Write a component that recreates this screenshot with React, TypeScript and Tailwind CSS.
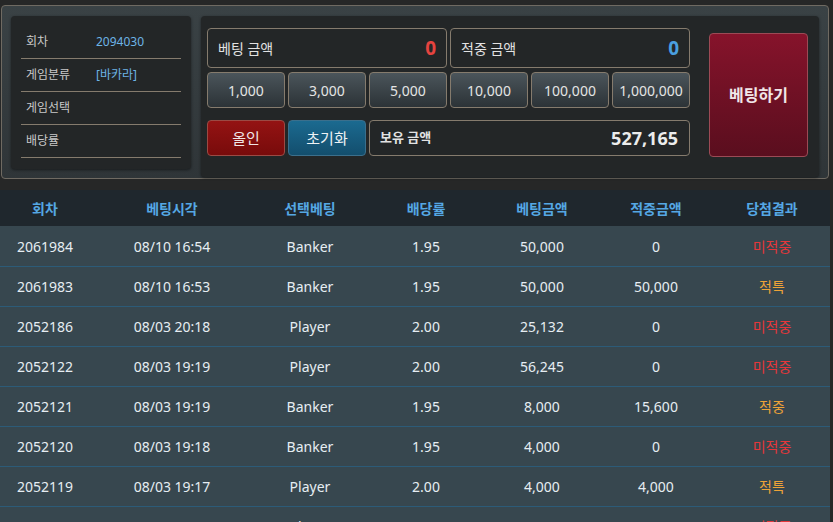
import React from "react";

const font = { fontFamily: '"Noto Sans", "Noto Sans CJK KR", sans-serif' };

type Row = {
  no: string;
  time: string;
  pick: string;
  odds: string;
  bet: string;
  win: string;
  result: string;
};

const rows: Row[] = [
  { no: "2061984", time: "08/10 16:54", pick: "Banker", odds: "1.95", bet: "50,000", win: "0", result: "미적중" },
  { no: "2061983", time: "08/10 16:53", pick: "Banker", odds: "1.95", bet: "50,000", win: "50,000", result: "적특" },
  { no: "2052186", time: "08/03 20:18", pick: "Player", odds: "2.00", bet: "25,132", win: "0", result: "미적중" },
  { no: "2052122", time: "08/03 19:19", pick: "Player", odds: "2.00", bet: "56,245", win: "0", result: "미적중" },
  { no: "2052121", time: "08/03 19:19", pick: "Banker", odds: "1.95", bet: "8,000", win: "15,600", result: "적중" },
  { no: "2052120", time: "08/03 19:18", pick: "Banker", odds: "1.95", bet: "4,000", win: "0", result: "미적중" },
  { no: "2052119", time: "08/03 19:17", pick: "Player", odds: "2.00", bet: "4,000", win: "4,000", result: "적특" },
  { no: "2052118", time: "08/03 19:16", pick: "Player", odds: "2.00", bet: "3,000", win: "0", result: "미적중" },
];

const cols = "grid grid-cols-[90px_164px_112px_120px_112px_116px_116px]";

function InfoRow({ label, value }: { label: string; value?: string }) {
  return (
    <div className="flex h-[33px] items-center border-b border-[#857b6d] px-[5px] text-[12px]">
      <span className="w-[70px] text-[#c9c9c9]">{label}</span>
      {value && <span className="text-[#6db4e6]">{value}</span>}
    </div>
  );
}

function Chip({ label }: { label: string }) {
  return (
    <button className="flex h-[36px] items-center justify-center rounded-[4px] border border-[#857b6d] bg-gradient-to-b from-[#4b555b] to-[#2c3337] text-[14px] text-[#e4e4e4]">
      {label}
    </button>
  );
}

export default function App() {
  return (
    <div className="min-h-[522px] w-[833px] overflow-hidden bg-[#262727]" style={font}>
      <div className="pt-[5px] pl-[1px]">
        <div className="flex h-[174px] w-[828px] rounded-[4px] border border-[#6f6a62] bg-gradient-to-b from-[#3a4245] to-[#2f3538] pl-[9px] pr-[9px] pt-[10px]">
          {/* left info panel */}
          <div className="h-[153px] w-[180px] rounded-[4px] bg-[#232627] px-[10px] pt-[10px] shadow-[0_1px_3px_rgba(0,0,0,0.5)]">
            <InfoRow label="회차" value="2094030" />
            <InfoRow label="게임분류" value="[바카라]" />
            <InfoRow label="게임선택" />
            <InfoRow label="배당률" />
          </div>
          {/* right betting panel */}
          <div className="ml-[10px] flex h-[161px] w-[618px] rounded-[4px] bg-[#232627] pl-[6px] pt-[12px] shadow-[0_1px_3px_rgba(0,0,0,0.5)]">
            <div className="w-[483px]">
              <div className="grid grid-cols-6 gap-x-[3px]">
                <div className="col-span-3 flex h-[40px] items-center justify-between rounded-[4px] border border-[#857b6d] px-[10px]">
                  <span className="text-[14px] text-[#e2e2e2]">베팅 금액</span>
                  <span className="text-[19px] font-bold text-[#e5433f]">0</span>
                </div>
                <div className="col-span-3 flex h-[40px] items-center justify-between rounded-[4px] border border-[#857b6d] px-[10px]">
                  <span className="text-[14px] text-[#e2e2e2]">적중 금액</span>
                  <span className="text-[19px] font-bold text-[#4a9fe0]">0</span>
                </div>
              </div>
              <div className="mt-[4px] grid grid-cols-6 gap-x-[3px]">
                <Chip label="1,000" />
                <Chip label="3,000" />
                <Chip label="5,000" />
                <Chip label="10,000" />
                <Chip label="100,000" />
                <Chip label="1,000,000" />
              </div>
              <div className="mt-[12px] grid grid-cols-6 gap-x-[3px]">
                <button className="flex h-[36px] items-center justify-center rounded-[4px] border border-[#9b4a44] bg-gradient-to-b from-[#941313] to-[#780b0b] text-[15px] text-[#f0e6e6]">
                  올인
                </button>
                <button className="flex h-[36px] items-center justify-center rounded-[4px] border border-[#3b6f8c] bg-gradient-to-b from-[#1b6a90] to-[#134e6d] text-[15px] text-[#eef2f5]">
                  초기화
                </button>
                <div className="col-span-4 flex h-[36px] items-center justify-between rounded-[4px] border border-[#857b6d] pl-[10px] pr-[11px]">
                  <span className="text-[13px] font-bold text-[#e2e2e2]">보유 금액</span>
                  <span className="text-[18px] font-bold text-[#ececec]">527,165</span>
                </div>
              </div>
            </div>
            <button className="ml-[19px] mt-[5px] flex h-[124px] w-[99px] items-center justify-center rounded-[4px] border border-[#9c4a55] bg-gradient-to-b from-[#86132b] to-[#5a0e1e] text-[16px] font-bold text-[#f1e6e8]">
              베팅하기
            </button>
          </div>
        </div>
      </div>

      {/* table */}
      <div className="mt-[11px] w-[830px]">
        <div className={`${cols} h-[36px] items-center bg-[#1f272d] text-center text-[14px] font-bold text-[#55a7e4]`}>
          <div>회차</div>
          <div>베팅시각</div>
          <div>선택베팅</div>
          <div>배당률</div>
          <div>베팅금액</div>
          <div>적중금액</div>
          <div>당첨결과</div>
        </div>
        {rows.map((r, i) => (
          <div
            key={i}
            className={`${cols} h-[40px] items-center bg-[#37474f] text-center text-[14px] text-[#e6edf2] ${i > 0 ? "border-t border-[#2c5b78]" : ""}`}
          >
            <div>{r.no}</div>
            <div>{r.time}</div>
            <div>{r.pick}</div>
            <div>{r.odds}</div>
            <div>{r.bet}</div>
            <div>{r.win}</div>
            <div className={r.result === "미적중" ? "text-[#e5373a]" : "text-[#eea338]"}>{r.result}</div>
          </div>
        ))}
      </div>
    </div>
  );
}
